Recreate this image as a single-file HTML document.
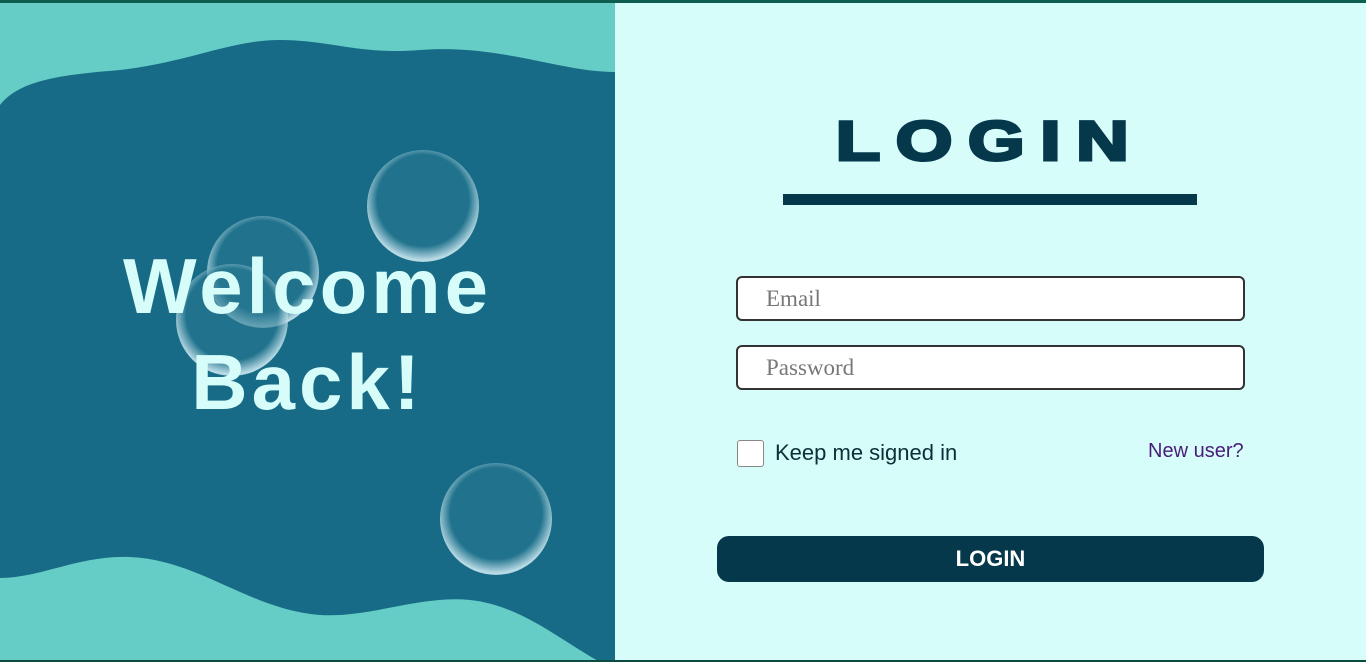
<!DOCTYPE html>
<html><head><meta charset="utf-8"><style>
*{margin:0;padding:0;box-sizing:border-box}
body{width:1366px;height:662px;overflow:hidden;background:#d6fdf9;font-family:"Liberation Sans",sans-serif;position:relative}
.top{position:absolute;left:0;top:0;width:1366px;height:3px;background:#0d5e50;z-index:5}
.bot{position:absolute;left:0;bottom:0;width:1366px;height:2px;background:#0d4a40;z-index:5}
.left{position:absolute;left:0;top:0;width:615px;height:662px;background:#66cdc6;overflow:hidden}
.welcome{position:absolute;left:0;top:238px;width:615px;text-align:center;color:#d6fdf9;font-weight:bold;font-size:78px;letter-spacing:4px;line-height:96px;z-index:2}
.bub{position:absolute;border-radius:50%;background:radial-gradient(circle at 50% 45%,rgba(40,120,145,.6) 55%,rgba(230,250,255,.8) 72%,rgba(200,230,240,.4) 80%,rgba(0,0,0,0) 82%);}
h1{position:absolute;left:783px;top:108px;width:414px;text-align:center;color:#04384a;font-size:56px;font-weight:900;letter-spacing:12px;transform:scaleX(1.3);transform-origin:center;-webkit-text-stroke:3px #04384a}
.bar{position:absolute;left:783px;top:194px;width:414px;height:11px;background:#04384a}
.inp{position:absolute;left:736px;width:509px;height:45px;background:#fff;border:2px solid #333;border-radius:6px;font-family:"Liberation Serif",serif;font-size:23px;color:#777;padding:8px 0 0 28px}
.cb{position:absolute;left:737px;top:440px;width:27px;height:27px;background:#fff;border:1px solid #888;border-radius:3px}
.keep{position:absolute;left:775px;top:440px;font-size:22px;color:#0d2f3a}
.new{position:absolute;left:1148px;top:440px;font-size:20px;color:#4a1c7a}
.btn{position:absolute;left:717px;top:536px;width:547px;height:46px;background:#04384a;border-radius:12px;color:#fff;font-weight:bold;font-size:22px;text-align:center;line-height:46px}
</style></head><body>
<div class="top"></div><div class="bot"></div>
<div class="left">
<svg width="615" height="662" style="position:absolute;left:0;top:0">
<path d="M0,105 C20,80 60,75 120,70 C190,62 230,40 280,40 C330,40 360,55 420,50 C500,44 560,72 615,72 L615,400 L0,400Z" fill="#176b87"/>
<path d="M0,300 L615,300 L615,662 L600,662 C560,640 520,605 470,600 C420,595 370,618 320,615 C250,610 200,560 130,557 C80,555 40,578 0,578Z" fill="#176b87"/>
</svg>
<div class="bub" style="left:367px;top:150px;width:112px;height:112px"></div>
<div class="bub" style="left:207px;top:216px;width:112px;height:112px"></div>
<div class="bub" style="left:176px;top:264px;width:112px;height:112px"></div>
<div class="bub" style="left:440px;top:463px;width:112px;height:112px"></div>
<div class="welcome">Welcome<br>Back!</div>
</div>
<h1>LOGIN</h1>
<div class="bar"></div>
<div class="inp" style="top:276px">Email</div>
<div class="inp" style="top:345px">Password</div>
<div class="cb"></div>
<div class="keep">Keep me signed in</div>
<div class="new">New user?</div>
<div class="btn">LOGIN</div>
</body></html>
